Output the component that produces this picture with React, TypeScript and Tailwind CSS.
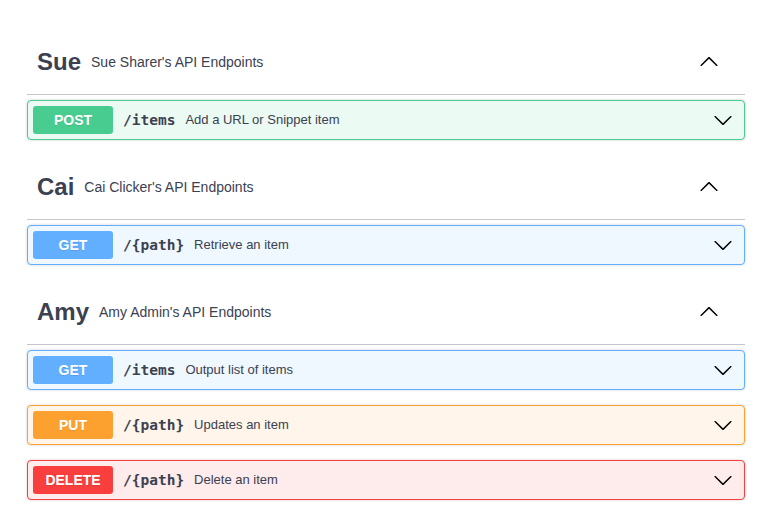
import React from "react";

const Arrow = ({ up }: { up?: boolean }) => (
  <svg width="20" height="20" viewBox="0 0 20 20" className={up ? "rotate-180" : ""}>
    <path
      fill="#000"
      d="M17.418 6.109c.272-.268.709-.268.979 0s.271.701 0 .969l-7.908 7.83c-.27.268-.707.268-.979 0l-7.908-7.83c-.27-.268-.27-.701 0-.969.271-.268.709-.268.979 0L10 13.25l7.418-7.141z"
    />
  </svg>
);

type Op = { method: "POST" | "GET" | "PUT" | "DELETE"; path: string; desc: string };

const styles: Record<Op["method"], { box: string; badge: string }> = {
  POST: { box: "border-[#49cc90] bg-[#ecfaf4]", badge: "bg-[#49cc90]" },
  GET: { box: "border-[#61affe] bg-[#eff7ff]", badge: "bg-[#61affe]" },
  PUT: { box: "border-[#fca130] bg-[#fff5ea]", badge: "bg-[#fca130]" },
  DELETE: { box: "border-[#f93e3e] bg-[#feebeb]", badge: "bg-[#f93e3e]" },
};

const OpBlock = ({ op }: { op: Op }) => (
  <div
    className={`mb-[15px] flex items-center rounded-[4px] border p-[5px] shadow-[0_0_3px_rgba(0,0,0,0.19)] ${styles[op.method].box}`}
  >
    <span
      className={`min-w-[80px] rounded-[3px] py-[6px] text-center text-[14px] font-bold leading-[16px] text-white [text-shadow:0_1px_0_rgba(0,0,0,0.1)] ${styles[op.method].badge}`}
    >
      {op.method}
    </span>
    <span className="px-[10px] pt-[2px] text-[14.5px] font-bold text-[#3b4151] [font-family:'DejaVu_Sans_Mono',monospace]">
      {op.path}
    </span>
    <span className="flex-1 text-[13px] text-[#3b4151]">{op.desc}</span>
    <span className="mr-[6px] flex">
      <Arrow />
    </span>
  </div>
);

const Section = ({ name, desc, ops }: { name: string; desc: string; ops: Op[] }) => (
  <div>
    <div className="mb-[5px] flex h-[65px] items-center border-b border-[#c4c6cb] pl-[10px] pr-[26px]">
      <span className="text-[24px] font-bold text-[#3b4151]">{name}</span>
      <span className="flex-1 px-[10px] text-[14px] text-[#3b4151]">{desc}</span>
      <Arrow up />
    </div>
    {ops.map((o, i) => (
      <OpBlock key={i} op={o} />
    ))}
  </div>
);

export default function App() {
  return (
    <div className="h-[531px] w-[772px] bg-white px-[27px] pt-[30px] [font-family:'Liberation_Sans',Arial,sans-serif]">
      <Section
        name="Sue"
        desc="Sue Sharer's API Endpoints"
        ops={[{ method: "POST", path: "/items", desc: "Add a URL or Snippet item" }]}
      />
      <Section
        name="Cai"
        desc="Cai Clicker's API Endpoints"
        ops={[{ method: "GET", path: "/{path}", desc: "Retrieve an item" }]}
      />
      <Section
        name="Amy"
        desc="Amy Admin's API Endpoints"
        ops={[
          { method: "GET", path: "/items", desc: "Output list of items" },
          { method: "PUT", path: "/{path}", desc: "Updates an item" },
          { method: "DELETE", path: "/{path}", desc: "Delete an item" },
        ]}
      />
    </div>
  );
}
